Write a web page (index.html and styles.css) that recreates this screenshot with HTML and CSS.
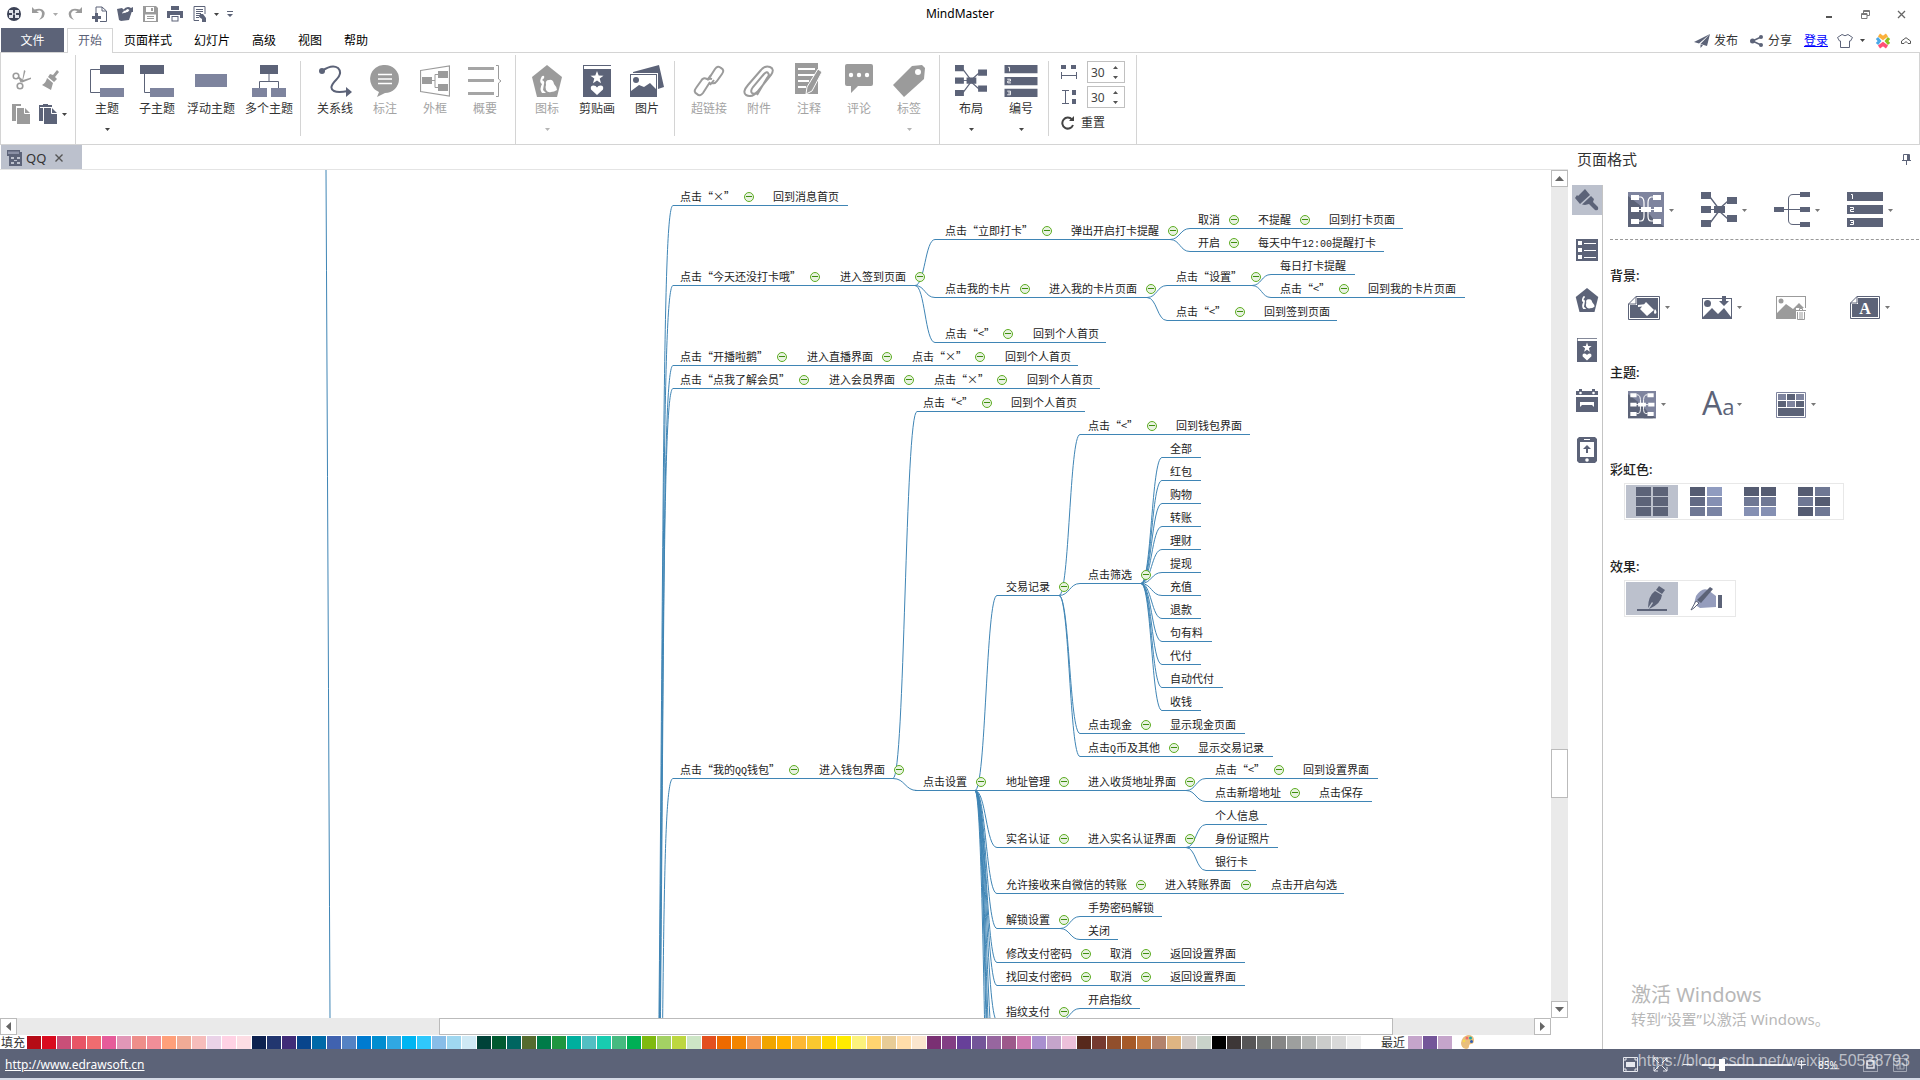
FILE: index.html
```html
<!DOCTYPE html>
<html lang="zh-CN">
<head>
<meta charset="utf-8">
<title>MindMaster</title>
<link rel="stylesheet" href="styles.css">
</head>
<body>
<svg class="sprite" aria-hidden="true">
  <symbol id="i-layout" viewBox="0 0 36 36">
    <path d="M9 5 18 17 27 9M9 31 18 19 27 27" fill="none" stroke="#5c6378" stroke-width="1.300"/>
    <path d="M0 0H10V7H0ZM0 14H10V21H0ZM0 28H10V35H0ZM13 14H24V21H13ZM26 5H36V12H26ZM26 23H36V30H26Z" fill="#5c6378"/>
    <path d="M9 17H14V18H9Z" fill="#5c6378"/>
  </symbol>
  <symbol id="i-number" viewBox="0 0 36 36">
    <path d="M0 0H36V9H0ZM0 13H36V22H0ZM0 26H36V35H0Z" fill="#5c6378"/>
    <path d="M4 2.500H5.500V7M3 15.500H6.500V17.500H3.500V19.500H7M3 28.500H6.500V32.500H3M4 30.500H6" fill="none" stroke="#fff" stroke-width="1"/>
  </symbol>
  <symbol id="i-theme" viewBox="0 0 36 36">
    <path d="M0 0H36V35H0Z" fill="#7e849e"/><path d="M0 4 18 18 32 35H0Z" fill="#5c6378"/><path d="M36 35 28 27 20 35Z" fill="#5c6378"/>
    <path d="M11 5H13Q16 6 16 11V24Q16 29 13 29H11M25 5H23Q20 6 20 11V24Q20 29 23 29H25M10 17.500H26" fill="none" stroke="#fff" stroke-width="1.200"/>
    <path d="M3 3H11V8H3ZM3 15H11V20H3ZM3 27H11V32H3ZM25 3H33V8H25ZM26 15H34V20H26ZM25 27H33V32H25ZM13 15H23V20H13Z" fill="#fff"/>
  </symbol>
  <symbol id="i-penta" viewBox="0 0 32 32">
    <path d="M16 0 31 12 26 32H6L1 12Z"/>
    <path d="M10 13q1-3 3-2 1 2-2 4 3 1 2 4l-1 6 3 3h-4q-3-4 0-9-3-2-1-6M15 25q-1-3 0-5-1-5 3-5 4-1 5 4 3 3 3 6-3 2-6 2-3 1-5-2Z" fill="#fff"/>
  </symbol>
  <symbol id="i-clip" viewBox="0 0 28 32">
    <path d="M0 4H28V32H0ZM0 0H28V1H1V4H0Z"/>
    <path d="M14 6 15.700 10.500 20.500 10.700 16.700 13.600 18 18.300 14 15.600 10 18.300 11.300 13.600 7.500 10.700 12.300 10.500ZM14 30 8 24.500Q7 20.500 10.500 20.500 13 20.500 14 22.500 15 20.500 17.500 20.500 21 20.500 20 24.500Z" fill="#fff"/>
  </symbol>
  <symbol id="i-caret" viewBox="0 0 5 3"><path d="M0 0H5L2.500 3Z"/></symbol>
</svg>

<header class="titlebar">
  <div class="quick">
    <svg class="ic" viewBox="0 0 18 18"><circle cx="9" cy="9" r="7" fill="#3c4256"/><path d="M4 5h4v3H4zM10 5h4v3h-4zM4 10h4v3H4zM10 10h4v3h-4zM7 8h4v2H7z" fill="#dfe2ea"/><path d="M9 3v12" stroke="#3c4256"/></svg>
    <button aria-label="撤销"><svg class="ic gray" viewBox="0 0 18 18"><path d="M2 2V8H9L6.500 6Q12 4 12 9 12 12 9 15 16 12 14.500 7 12 2 4.500 4.500Z"/></svg></button>
    <button class="tiny faint" aria-label="撤销列表"><svg class="caret" viewBox="0 0 5 3"><use href="#i-caret"/></svg></button>
    <button aria-label="重做"><svg class="ic gray" viewBox="0 0 18 18"><path d="M16 2V8H9L11.500 6Q6 4 5 9 5 12 8 15 1 12 3 7 6 2 13.500 4.500Z"/></svg></button>
    <button aria-label="新建"><svg class="ic" viewBox="0 0 18 18"><path d="M5 8V2H11L15.500 6V16.500H9" fill="none" stroke="#5c6378"/><path d="M11 2V6H15" fill="none" stroke="#5c6378"/><path d="M4 8H7V11H10V14H7V17H4V14H1V11H4Z"/></svg></button>
    <button aria-label="打开"><svg class="ic" viewBox="0 0 18 18"><path d="M1 4 6 3 8 5 7 8 5 16 3 15ZM7 8 16 6 13 15 5 16Z"/><path d="M7 5Q11 0 15 3L17 2V7H12L13.500 5Q11 3 9 6Z"/><path d="M6 8Q11 8 12 4" fill="none" stroke="#fff" stroke-width=".8"/></svg></button>
    <button aria-label="保存"><svg class="ic gray" viewBox="0 0 18 18"><path d="M2 1H15L17 3V17H2Z"/><path d="M5 2H13V7H5ZM4 9.500H15V16H4Z" fill="#fff"/><path d="M10 3h2v3h-2zM6 11h7v1H6zM6 13h7v1H6z"/></svg></button>
    <button aria-label="打印"><svg class="ic" viewBox="0 0 18 18"><path d="M5 1H13V5H5ZM1 6H17V13H14V10H4V13H1ZM5.500 11H12.500V16.500H5.500Z"/><path d="M6.500 12H11.500V15.500H6.500Z" fill="#fff"/></svg></button>
    <button aria-label="预览"><svg class="ic" viewBox="0 0 18 18"><path d="M3 1.500H14V9M3 1.500V15.500H8M5 4.500H12M5 6.500H12M5 8.500H10M5 10.500H9M5 12.500H8" fill="none" stroke="#5c6378"/><path d="M9 9H12L15 13V17H11V14L8 12Z"/></svg></button>
    <button class="tiny" aria-label="更多"><svg class="caret" viewBox="0 0 5 3"><use href="#i-caret"/></svg></button>
    <button class="tiny" aria-label="自定义快速访问"><svg width="6" height="7" viewBox="0 0 6 7"><path d="M0 0H6V1H0ZM0 3H6L3 6Z"/></svg></button>
  </div>
  <h1>MindMaster</h1>
  <div class="wincontrols">
    <button aria-label="最小化"><svg width="9" height="9" viewBox="0 0 9 9"><path d="M1 6H7V8H1Z" fill="#555"/></svg></button>
    <button aria-label="还原"><svg width="9" height="9" viewBox="0 0 9 9"><path d="M2.500 3V.5H8.500V5.500H6M.5 3.500H6V8.500H.5ZM2 1.500H9M0 4.500H6" fill="none" stroke="#777"/></svg></button>
    <button aria-label="关闭"><svg width="9" height="9" viewBox="0 0 9 9"><path d="M1 1 8 8M8 1 1 8" stroke="#666" stroke-width="1.300"/></svg></button>
  </div>
</header>

<nav class="menubar">
  <button class="file">文件</button>
  <button class="tab active">开始</button>
  <button class="tab">页面样式</button>
  <button class="tab">幻灯片</button>
  <button class="tab">高级</button>
  <button class="tab">视图</button>
  <button class="tab">帮助</button>
  <div class="account">
    <button><svg width="16" height="14" viewBox="0 0 16 14"><path d="M16 0 0 8 5 9.500ZM16 0 6.500 10 13 12ZM6.500 10.500 9 11.300 6.500 14Z"/></svg>发布</button>
    <button class="share"><svg width="13" height="12" viewBox="0 0 13 12"><path d="M11 2 2.500 6 11 10" fill="none" stroke="#5c6378" stroke-width="1.500"/><circle cx="2.500" cy="6" r="2.500"/><circle cx="11" cy="2" r="2"/><circle cx="11" cy="10" r="2"/></svg>分享</button>
    <a href="#login">登录</a>
    <button class="skin" aria-label="皮肤"><svg width="16" height="14" viewBox="0 0 16 14"><path d="M5 .5Q8 3 11 .5L15.500 3.500 13.500 7H12.500V13.500H3.500V7H2.500L.5 3.500Z" fill="none" stroke="#5c6378"/></svg><svg class="caret" viewBox="0 0 5 3"><use href="#i-caret"/></svg></button>
    <svg width="16" height="16" viewBox="0 0 16 16"><path d="M4 2 8 5 12 2" fill="none" stroke="#fbb03b" stroke-width="3.500"/><path d="M4 14 8 11 12 14" fill="none" stroke="#ff4f75" stroke-width="3.500"/><path d="M2 5 4.500 8 2 11" fill="none" stroke="#4aa8e8" stroke-width="3"/><path d="M14 5 11.500 8 14 11" fill="none" stroke="#8fc01f" stroke-width="3"/></svg>
    <button class="collapse" aria-label="折叠功能区"><svg width="10" height="8" viewBox="0 0 10 8"><path d="M.5 4 5 .7 9.500 4V6.500H7L5 4.500 3 6.500H.5Z" fill="none" stroke="#555"/></svg></button>
  </div>
</nav>

<section class="ribbon" aria-label="开始">
  <div class="group clipboard">
    <button aria-label="剪切"><svg class="gray" width="20" height="20" viewBox="0 0 20 20"><path d="M10 12 12 0 13.500 1 11 10 19 7.500V9L9 13Z"/><path d="M8 9 9.500 12" stroke="#9b9b9b" stroke-width="2"/><circle cx="4" cy="6" r="2.800" fill="none" stroke="#9b9b9b" stroke-width="1.600"/><circle cx="8" cy="16" r="2.800" fill="none" stroke="#9b9b9b" stroke-width="1.600"/><path d="M6 7 11 11" stroke="#9b9b9b" stroke-width="1.800"/></svg></button>
    <button class="brush" aria-label="格式刷"><svg class="gray" width="18" height="20" viewBox="0 0 18 20"><path d="M15 0 17 2 13 7 15 9 12 12 6 7 8 4 11 5ZM5 8 11 13 9 20 0 15Q4 13 5 8Z"/></svg></button>
    <button aria-label="复制"><svg class="gray" width="20" height="20" viewBox="0 0 20 20"><path d="M0 0H9V2H4V17H0ZM5 4H13L18 9V20H5Z"/><path d="M12.500 4V9.500H18" fill="none" stroke="#fff"/></svg></button>
    <button aria-label="粘贴"><svg width="20" height="20" viewBox="0 0 20 20"><path d="M0 1H4V0H9V1H13V3H4V17H0ZM5 4H13L18 9V20H5Z"/><path d="M12.500 4V9.500H18M1 3.500H12" fill="none" stroke="#fff"/></svg><svg class="caret" viewBox="0 0 5 3"><use href="#i-caret"/></svg></button>
  </div>
  <div class="group">
    <button class="tool"><svg width="34" height="32" viewBox="0 0 34 32"><path d="M10 0H34V9H10Z"/><path d="M10 23H34V32H10Z" fill="#7e849e"/><path d="M10 4.500H.5V27.500H10" fill="none" stroke="#5c6378"/></svg><span>主题</span><svg class="caret" viewBox="0 0 5 3"><use href="#i-caret"/></svg></button>
    <button class="tool"><svg width="34" height="32" viewBox="0 0 34 32"><path d="M0 0H24V9H0Z"/><path d="M10 23H34V32H10Z" fill="#7e849e"/><path d="M4.500 9V27.500H10" fill="none" stroke="#5c6378"/></svg><span>子主题</span></button>
    <button class="tool wide"><svg width="32" height="32" viewBox="0 0 32 32"><path d="M0 9H32V22H0Z" fill="#7e849e"/></svg><span>浮动主题</span></button>
    <button class="tool wide"><svg width="34" height="32" viewBox="0 0 34 32"><path d="M8 0H26V9H8Z"/><path d="M0 23H15V32H0ZM19 23H34V32H19Z" fill="#7e849e"/><path d="M17 9V16M7.500 23V16.500H26.500V23" fill="none" stroke="#5c6378"/></svg><span>多个主题</span></button>
    <div class="split"></div>
    <button class="tool"><svg width="34" height="32" viewBox="0 0 34 32"><circle cx="4" cy="6" r="3"/><path d="M4 6Q14-1 20 3 25 8 18 15 10 23 16 26 20 28 30 26" fill="none" stroke="#5c6378" stroke-width="2"/><path d="M28 22 34 27 28 32Z"/></svg><span>关系线</span></button>
    <button class="tool" disabled><svg width="30" height="32" viewBox="0 0 30 32"><path d="M15 0A14 14 0 0 1 15 28L7 32 9 27A14 14 0 0 1 15 0Z"/><path d="M8 9.500H22M8 14H22M8 18.500H22" stroke="#fff" stroke-width="1.500"/></svg><span>标注</span></button>
    <button class="tool" disabled><svg width="30" height="32" viewBox="0 0 30 32"><path d="M.5 5.500 29.500 1V31L.5 26.500Z" fill="none" stroke="#9b9b9b" stroke-width="1.200"/><path d="M2 12H12V19H2ZM18 6H28V13H18ZM18 19H28V26H18Z"/><path d="M12 15.500H15M18 9.500H15V22.500H18" fill="none" stroke="#9b9b9b"/></svg><span>外框</span></button>
    <button class="tool" disabled><svg width="34" height="32" viewBox="0 0 34 32"><path d="M0 2H26V5H0ZM0 14H26V17H0ZM0 27H26V30H0Z" opacity=".9"/><path d="M28 .5H30.500V14L33 16 30.500 18V31.500H28" fill="none" stroke="#9b9b9b"/></svg><span>概要</span></button>
  </div>
  <div class="group">
    <button class="tool" disabled><svg width="32" height="32"><use href="#i-penta"/></svg><span>图标</span><svg class="caret" viewBox="0 0 5 3"><use href="#i-caret"/></svg></button>
    <button class="tool"><svg width="28" height="32"><use href="#i-clip"/></svg><span>剪贴画</span></button>
    <button class="tool"><svg width="34" height="32" viewBox="0 0 34 32"><path d="M3 7 29 0 34 22 28 24V8H3ZM0 9H27V32H0Z"/><path d="M1 10H26V24L20 18 14 22 9 20 1 26Z" fill="#fff"/><circle cx="6" cy="15" r="3"/></svg><span>图片</span></button>
    <div class="split"></div>
    <button class="tool" disabled><svg width="32" height="32" viewBox="0 0 32 32"><g fill="none" stroke="#9b9b9b" stroke-width="2"><path d="M15 15 22 4Q25 0 28 3 32 5 29 9L24 16Q22 19 19 18"/><path d="M19 14Q16 13 14 15M17 17 10 28Q7 32 4 29 0 27 3 23L8 16Q10 12 14 14M18 10 14 15M21 15 17 20"/></g></svg><span>超链接</span></button>
    <button class="tool" disabled><svg width="32" height="32" viewBox="0 0 32 32"><path d="M21 9 10 22Q7 26 9 28 12 30 15 26L28 10Q32 4 27 2 22 0 18 5L5 20Q-1 27 3 30 9 33 14 27M21 9Q24 6 25 8 27 10 24 13L14 30" fill="none" stroke="#9b9b9b" stroke-width="2"/></svg><span>附件</span></button>
    <button class="tool" disabled><svg class="lift" width="28" height="32" viewBox="0 0 28 32"><path d="M0 0H23V31H0Z"/><path d="M3 6H20M3 12H20M3 18H14M3 24H11" stroke="#fff" stroke-width="2"/><path d="M23 6 27 9 17 28 11 31 12 24Z" stroke="#fff"/></svg><span>注释</span></button>
    <button class="tool" disabled><svg class="lift" width="28" height="32" viewBox="0 0 28 32"><path d="M2 1H26Q28 1 28 3V21Q28 23 26 23H13L6 30V23H2Q0 23 0 21V3Q0 1 2 1Z"/><g fill="#fff"><circle cx="6" cy="12" r="2.200"/><circle cx="14" cy="12" r="2.200"/><circle cx="22" cy="12" r="2.200"/></g></svg><span>评论</span></button>
    <button class="tool" disabled><svg width="32" height="32" viewBox="0 0 32 32"><path d="M19 1 29 0 32 3 31 14 11 32 0 20Z"/><circle cx="25" cy="7" r="3" fill="#fff"/></svg><span>标签</span><svg class="caret" viewBox="0 0 5 3"><use href="#i-caret"/></svg></button>
  </div>
  <div class="group">
    <button class="tool"><svg width="32" height="32"><use href="#i-layout"/></svg><span>布局</span><svg class="caret" viewBox="0 0 5 3"><use href="#i-caret"/></svg></button>
    <button class="tool"><svg width="34" height="33"><use href="#i-number"/></svg><span>编号</span><svg class="caret" viewBox="0 0 5 3"><use href="#i-caret"/></svg></button>
    <div class="split flush"></div>
    <div class="spacing">
      <label for="hgap" aria-label="水平间距"><svg width="16" height="16" viewBox="0 0 16 16"><path d="M0 1H5V5H0ZM10 1H15V5H10Z"/><path d="M.5 8V15M15.500 8V15M0 11.500H16" stroke="#5c6378" fill="none"/></svg></label>
      <div class="spin"><input id="hgap" type="text" value="30"><svg width="5" height="13" viewBox="0 0 5 13"><path d="M0 3 2.500 0 5 3ZM0 10H5L2.500 13Z" fill="#555"/></svg></div>
      <label for="vgap" aria-label="垂直间距"><svg width="16" height="16" viewBox="0 0 16 16"><path d="M11 1H15V6H11ZM11 10H15V15H11Z"/><path d="M1 1.500H8M1 14.500H8M4.500 1V15" stroke="#5c6378" fill="none"/></svg></label>
      <div class="spin"><input id="vgap" type="text" value="30"><svg width="5" height="13" viewBox="0 0 5 13"><path d="M0 3 2.500 0 5 3ZM0 10H5L2.500 13Z" fill="#555"/></svg></div>
      <button class="reset"><svg width="14" height="14" viewBox="0 0 14 14"><path d="M11 3.500A5.500 5.500 0 1 0 12 9" fill="none" stroke="#444" stroke-width="2"/><path d="M8 5H13V0Z" fill="#444"/></svg>重置</button>
    </div>
  </div>
</section>

<main class="body">
  <div class="workspace">
    <div class="doctabs">
      <div class="doctab">
        <svg width="16" height="16" viewBox="0 0 16 16"><path d="M0 0H13V2H15V16H2V6H0Z"/><path d="M1 1.500H12V4H1Z" fill="#8b91a6"/><path d="M4 7h3v2H4zM10 7h3v2h-3zM4 12h3v2H4zM10 12h3v2h-3zM7 10h3v1H7z" fill="#bcc1cd"/></svg>
        <span>QQ</span>
        <button aria-label="关闭文档"><svg width="8" height="8" viewBox="0 0 8 8"><path d="M.5.5 7.500 7.500M7.500.5.5 7.500" stroke="#555" stroke-width="1.400"/></svg></button>
      </div>
    </div>
    <div class="viewrow">
      <div class="canvas" id="canvas"></div>
      <div class="vscroll">
        <button aria-label="向上滚动"><svg width="9" height="5" viewBox="0 0 9 5"><path d="M0 5 4.500 0 9 5Z"/></svg></button>
        <div class="track"><div class="thumb"></div></div>
        <button aria-label="向下滚动"><svg width="9" height="5" viewBox="0 0 9 5"><path d="M0 0H9L4.500 5Z"/></svg></button>
      </div>
    </div>
    <div class="hscroll">
      <button aria-label="向左滚动"><svg width="5" height="9" viewBox="0 0 5 9"><path d="M5 0V9L0 4.500Z"/></svg></button>
      <div class="track"><div class="thumb"></div></div>
      <button aria-label="向右滚动"><svg width="5" height="9" viewBox="0 0 5 9"><path d="M0 0V9L5 4.500Z"/></svg></button>
    </div>
    <div class="palette">
      <span class="fill">填充</span>
      <div class="swatches" id="swatches"></div>
      <span class="recent">最近</span>
      <div class="swatches" id="recent"></div>
      <button class="more" aria-label="更多颜色"><svg width="13" height="14" viewBox="0 0 13 14"><path d="M7 0Q13 0 13 5 13 9 10 9 8 9 8 11 8 14 5 14 0 13 0 8 1 1 7 0Z" fill="#e9bf7c"/><circle cx="6" cy="3" r="1.500" fill="#f26d6d"/><circle cx="9.500" cy="3" r="1.500" fill="#22a7a7"/><circle cx="10.500" cy="6.500" r="1.500" fill="#3560b0"/><circle cx="3" cy="6" r="1.300" fill="#f7d94c"/></svg></button>
    </div>
  </div>

  <aside class="panel">
    <div class="panelhead"><h2>页面格式</h2><button aria-label="固定"><svg width="9" height="11" viewBox="0 0 9 11"><path d="M1.500 6V.5H7.500V6M5.500 0V6M6.500 0V6M0 6.500H9M4.500 7V11" fill="none" stroke="#5c6378"/></svg></button></div>
    <div class="panelbody">
      <div class="rail">
        <button class="on" aria-label="页面格式"><svg width="24" height="22" viewBox="0 0 24 22"><path d="M10 0 15 6 5 15 0 9 2 6 3 7ZM16 7 19 10 18 13 23 18Q24 22 20 21L14 15 10 16 7 15.500Z"/></svg></button>
        <button aria-label="大纲"><svg width="22" height="22" viewBox="0 0 22 22"><path d="M0 0H22V22H0Z"/><path d="M2 2H6V6H2ZM2 9H6V13H2ZM2 16H6V20H2ZM8 4H20V5H8ZM8 11H20V12H8ZM8 18H20V19H8Z" fill="#fff"/></svg></button>
        <button aria-label="图标"><svg width="24" height="24"><use href="#i-penta"/></svg></button>
        <button aria-label="剪贴画"><svg width="20" height="24" viewBox="0 0 28 32" preserveAspectRatio="none"><use href="#i-clip" width="28" height="32"/></svg></button>
        <button aria-label="任务"><svg width="22" height="23" viewBox="0 0 22 23"><path d="M0 2H3V0H6V2H16V0H19V2H22V6H0ZM0 8H22V23H0Z"/><circle cx="4.500" cy="4" r="1.300" fill="#fff"/><circle cx="17.500" cy="4" r="1.300" fill="#fff"/><path d="M4 13H18V18L16 16H6L4 18Z" fill="#fff"/></svg></button>
        <button aria-label="手机"><svg width="20" height="26" viewBox="0 0 20 26"><path d="M2 0H18L20 2V24L18 26H2L0 24V2Z"/><path d="M3 5H17V20H3ZM7 2H13V3H7Z" fill="#fff"/><circle cx="10" cy="23" r="1.800" fill="#fff"/><path d="M10 8 14 12H11V16H9V12H6Z"/></svg></button>
      </div>
      <div class="options">
        <div class="icons top">
          <button aria-label="主题样式"><svg width="36" height="36"><use href="#i-theme"/></svg><svg class="caret" viewBox="0 0 5 3"><use href="#i-caret"/></svg></button>
          <button aria-label="布局"><svg width="36" height="36"><use href="#i-layout"/></svg><svg class="caret" viewBox="0 0 5 3"><use href="#i-caret"/></svg></button>
          <button aria-label="连接线"><svg width="36" height="36" viewBox="0 0 36 36"><path d="M0 15H10V20H0ZM26 0H36V5H26ZM26 15H36V20H26ZM26 30H36V35H26Z"/><path d="M10 17.500H26M26 2.500H19Q14.500 2.500 14.500 7V28Q14.500 32.500 19 32.500H26" fill="none" stroke="#5c6378"/></svg><svg class="caret" viewBox="0 0 5 3"><use href="#i-caret"/></svg></button>
          <button aria-label="编号"><svg width="36" height="36"><use href="#i-number"/></svg><svg class="caret" viewBox="0 0 5 3"><use href="#i-caret"/></svg></button>
        </div>
        <section>
          <h3>背景:</h3>
          <div class="icons">
            <button aria-label="背景颜色"><svg width="32" height="24" viewBox="0 0 32 24"><path d="M8 .5H31.500V23.500H.5V8Z" fill="#fff" stroke="#5c6378"/><path d="M9 2H30V22H2V9H9Z"/><path d="M.5 8H8V.5" fill="none" stroke="#5c6378"/><path d="M12 13 18 6 26 14 19 20ZM10 9 18 8 18 10 10 11ZM27 13Q30 17 27 18 25 17 27 13Z" fill="#fff"/></svg><svg class="caret" viewBox="0 0 5 3"><use href="#i-caret"/></svg></button>
            <button aria-label="背景图片"><svg width="30" height="24" viewBox="0 0 30 24"><path d="M0 2H30V23H0Z"/><path d="M1 3H29V21L22 12 16 18 10 12 1 21Z" fill="#fff"/><circle cx="5.500" cy="7.500" r="3.500"/><path d="M20 0H24V5H27L22 10 17 5H20Z"/></svg><svg class="caret" viewBox="0 0 5 3"><use href="#i-caret"/></svg></button>
            <button aria-label="移除背景" disabled><svg width="30" height="24" viewBox="0 0 30 24"><path d="M0 0H30V23H0Z"/><path d="M1 1H29V13L23 7 17 13 10 8 1 17Z" fill="#fff"/><circle cx="5" cy="5" r="2.500"/><path d="M20 12H30V24H20Z" fill="#fff"/><path d="M20 14.500H30M23.500 14V12.500H26.500V14M21.500 16V23.500H28.500V16M24 16V23M26 16V23" fill="none" stroke="#9b9b9b"/></svg></button>
            <button aria-label="水印"><svg width="30" height="24" viewBox="0 0 30 24"><path d="M7 .5H29.500V22.500H.5V7Z" fill="#fff" stroke="#5c6378"/><path d="M8 2H28V21H2V8H8Z"/><path d="M.5 7H7V.5" fill="none" stroke="#5c6378"/><text x="15" y="18" text-anchor="middle" class="wm">A</text></svg><svg class="caret" viewBox="0 0 5 3"><use href="#i-caret"/></svg></button>
          </div>
        </section>
        <section>
          <h3>主题:</h3>
          <div class="icons">
            <button aria-label="主题"><svg width="28" height="28"><use href="#i-theme"/></svg><svg class="caret" viewBox="0 0 5 3"><use href="#i-caret"/></svg></button>
            <button aria-label="字体"><span class="aa">A<small>a</small></span><svg class="caret" viewBox="0 0 5 3"><use href="#i-caret"/></svg></button>
            <button aria-label="主题颜色"><svg width="30" height="26" viewBox="0 0 30 26"><path d="M.5.5H29.500V25.500H.5Z" fill="#fff" stroke="#7e849e"/><path d="M2 2H10V8H2ZM20 2H28V8H20ZM11 9H19V15H11Z" fill="#7e849e"/><path d="M11 2H19V8H11ZM2 9H10V15H2ZM20 9H28V15H20ZM2 16H28V24H2Z"/></svg><svg class="caret" viewBox="0 0 5 3"><use href="#i-caret"/></svg></button>
          </div>
        </section>
        <section>
          <h3>彩虹色:</h3>
          <div class="choices">
            <button class="on" aria-label="单色"><svg width="32" height="29" viewBox="0 0 32 29"><path d="M0 0H15V9H0ZM17 0H32V9H17ZM0 10H15V19H0ZM17 10H32V19H17ZM0 20H15V29H0ZM17 20H32V29H17Z"/></svg></button>
            <button aria-label="彩虹一"><svg width="32" height="29" viewBox="0 0 32 29"><path d="M0 0H15V9H0Z" fill="#555c72"/><path d="M17 0H32V9H17Z" fill="#909cc0"/><path d="M0 10H15V19H0Z" fill="#626a84"/><path d="M17 10H32V19H17Z" fill="#8590b3"/><path d="M0 20H15V29H0Z" fill="#6f7894"/><path d="M17 20H32V29H17Z" fill="#7a84a4"/></svg></button>
            <button aria-label="彩虹二"><svg width="32" height="29" viewBox="0 0 32 29"><path d="M0 0H15V9H0ZM17 0H32V9H17Z" fill="#555c72"/><path d="M0 10H15V19H0ZM17 10H32V19H17Z" fill="#6f7894"/><path d="M0 20H15V29H0ZM17 20H32V29H17Z" fill="#8590b3"/></svg></button>
            <button aria-label="彩虹三"><svg width="32" height="29" viewBox="0 0 32 29"><path d="M0 0H15V9H0ZM17 10H32V19H17ZM0 20H15V29H0Z" fill="#555c72"/><path d="M17 0H32V9H17ZM0 10H15V19H0ZM17 20H32V29H17Z" fill="#6f7894"/></svg></button>
          </div>
        </section>
        <section>
          <h3>效果:</h3>
          <div class="choices">
            <button class="on" aria-label="钢笔"><svg width="30" height="25" viewBox="0 0 30 25"><path d="M0 23H30V25H0Z"/><path d="M22 0 28 4 25 8 19 4ZM18 5 25 9Q24 18 12 23L16 17 15 16 11 22Q11 10 18 5Z"/></svg></button>
            <button aria-label="手绘"><svg width="32" height="26" viewBox="0 0 32 26"><path d="M6 10Q12 1 18 4L26 10V21L10 22 4 18Z" fill="#959dbd"/><path d="M28 9H32V22H28Z"/><path d="M20 1 23 3 11 17 7 14Z"/><path d="M6 15 9 17 4 22 1 24Z" fill="#fff" stroke="#5c6378"/></svg></button>
          </div>
        </section>
      </div>
    </div>
    <div class="activate"><p class="big">激活 Windows</p><p>转到“设置”以激活 Windows。</p></div>
  </aside>
</main>

<footer class="status">
  <a href="http://www.edrawsoft.cn">http://www.edrawsoft.cn</a>
  <div class="zoombar">
    <button aria-label="适应页面"><svg width="15" height="15" viewBox="0 0 15 15"><path d="M.5.500H14.500V14.500H.5Z" fill="none" stroke="#e6e8ee"/><path d="M3 5H12V10H3Z" fill="#e6e8ee"/><path d="M2 4V2H4M11 2H13V4M13 11V13H11M4 13H2V11" fill="none" stroke="#e6e8ee"/></svg></button>
    <button class="full" aria-label="全屏"><svg width="15" height="15" viewBox="0 0 15 15"><path d="M1 5V1H5M10 1H14V5M14 10V14H10M5 14H1V10M1 1 6 6M14 1 9 6M14 14 9 9M1 14 6 9" fill="none" stroke="#e6e8ee"/></svg></button>
    <button class="step" aria-label="缩小"><svg width="9" height="9" viewBox="0 0 9 9"><path d="M0 4H9V5H0Z" fill="#e6e8ee"/></svg></button>
    <input type="range" aria-label="缩放" min="0" max="100" value="20">
    <button class="step" aria-label="放大"><svg width="9" height="9" viewBox="0 0 9 9"><path d="M0 4H9V5H0ZM4 0H5V9H4Z" fill="#e6e8ee"/></svg></button>
    <span class="pct">85%</span>
    <button class="fit" aria-label="适应窗口"><svg width="15" height="15" viewBox="0 0 15 15"><path d="M.5.500H14.500V14.500H.5Z" fill="none" stroke="#e6e8ee" stroke-dasharray="1 1"/><path d="M4 4H11V11H4Z" fill="none" stroke="#e6e8ee" stroke-width="1.500"/></svg></button>
    <button aria-label="导航"><svg width="14" height="14" viewBox="0 0 14 14" opacity=".5"><path d="M.5.500H13.500V13.500H.5ZM4 3H7V11H4ZM7 6H11V11H7Z" fill="none" stroke="#e6e8ee"/></svg></button>
  </div>
  <div class="stamp">https://blog.csdn.net/weixin_50538793</div>
</footer>
<div class="taskbar"></div>
<script src="app.js"></script>
</body>
</html>
```

FILE: styles.css
```css
* { box-sizing: border-box; }
body {
  margin: 0;
  min-height: 100vh;
  display: flex;
  flex-direction: column;
  background: #fff;
  color: #333;
  font: 12px/16px "Noto Sans", "Noto Sans CJK SC", sans-serif;
  overflow: hidden;
}
button {
  border: 0;
  padding: 0;
  margin: 0;
  background: none;
  font: inherit;
  color: inherit;
  fill: inherit;
  display: flex;
  align-items: center;
  justify-content: center;
}
h1, h2, h3, p { margin: 0; font-weight: 400; }
svg { fill: #5c6378; flex: none; display: block; }
.sprite { position: absolute; width: 0; height: 0; fill: inherit; }
.sprite symbol { fill: inherit; }
.caret { width: 5px; height: 3px; fill: #444; }
.gray { fill: #9b9b9b; }

.titlebar {
  display: grid;
  grid-template-columns: 1fr auto 1fr;
  height: 28px;
  align-items: center;
}
.quick { display: flex; align-items: center; padding-left: 5px; height: 26px; }
.quick > * { width: 18px; margin-right: 7px; }
.quick .ic { width: 18px; height: 18px; }
.quick > .tiny { width: 6px; margin-right: 8px; margin-left: -3px; }
.quick > .tiny + .tiny { margin-left: 0; }
.quick .faint .caret { fill: #aaa; }
.titlebar h1 { font-size: 12px; color: #000; }
.wincontrols { display: flex; justify-content: flex-end; gap: 27px; padding-right: 14px; height: 24px; }

.menubar { display: flex; height: 25px; margin-bottom: -1px; position: relative; color: #000; }
.file { width: 63px; margin-left: 1px; padding-top: 1px; background: #5c6378; color: #fff; height: 24px; }
.tab { padding: 2px 11px 0; height: 24px; }
.tab.active {
  margin: 0 0 0 3px;
  padding: 0 10px;
  height: 25px;
  border: 1px solid #d4d4d4;
  border-bottom: 0;
  background: #fff;
  color: #5c6378;
}
.account { margin-left: auto; display: flex; align-items: center; padding-right: 9px; color: #333; }
.account button { gap: 4px; }
.account .share { margin: 0 12px; gap: 5px; }
.account a { color: #00f; }
.account .skin { margin: 0 10px 0 9px; gap: 7px; }
.account .collapse { margin-left: 10px; }

.ribbon { display: flex; height: 93px; border: 1px solid #d4d4d4; }
.group { display: flex; margin-top: 2px; padding: 0 5px 0 6px; border-right: 1px solid #d4d4d4; }
.split { width: 1px; height: 75px; background: #d4d4d4; margin: 6px 9px 0 2px; }
.split.flush { margin-right: 0; }
.clipboard { display: grid; grid-template: 34px 34px / 27px 34px; padding: 8px 2px 0 11px; width: 75px; }
.clipboard button { justify-content: flex-start; gap: 3px; }
.clipboard .brush { padding-left: 3px; }
.tool {
  width: 50px;
  height: 80px;
  padding-top: 10px;
  display: grid;
  grid-template-rows: 32px 24px 10px;
  justify-items: center;
  align-items: center;
  justify-content: center;
  align-content: start;
  white-space: nowrap;
}
.tool.wide { width: 58px; }
.tool svg:first-child { align-self: start; }
.tool .caret { align-self: end; }
.tool .lift { margin-top: -2px; }
.tool:disabled { color: #a3a3a3; }
button:disabled svg { fill: #9b9b9b; }
.tool:disabled .caret { fill: #b5b5b5; }
.spacing {
  display: grid;
  grid-template-columns: 16px 38px;
  grid-template-rows: 22px 22px 24px;
  column-gap: 10px;
  row-gap: 3px;
  padding: 6px 6px 0 12px;
  align-items: center;
}
.spin { display: flex; align-items: center; height: 22px; border: 1px solid #c0c0c0; padding-right: 6px; }
.spin input { width: 25px; border: 0; padding: 1px 0 0 3px; font: inherit; color: #444; outline: 0; }
.reset { grid-column: 1 / 3; justify-content: flex-start; gap: 6px; }

.body { flex: 1; display: flex; min-height: 0; }
.workspace { flex: 1; min-width: 0; display: flex; flex-direction: column; }
.doctabs { height: 25px; border-bottom: 1px solid #e4e4e4; padding: 0 0 0 1px; display: flex; }
.doctab { width: 81px; background: #bcc1cd; display: flex; align-items: center; padding: 1px 0 0 6px; font-size: 13px; }
.doctab span { margin: 0 9px 0 3px; }
.viewrow { flex: 1; display: flex; min-height: 0; }
.canvas { flex: 1; min-width: 0; position: relative; overflow: hidden; font: 11px/14px "Noto Sans CJK SC", sans-serif; color: #222; }
.canvas svg { width: 100%; height: 100%; overflow: hidden; }
.canvas path { fill: none; stroke: #3f85b5; }
.canvas circle { fill: #e9f2e2; stroke: #5dad22; }
.canvas .minus { stroke: #3f8f0f; }
.node { position: absolute; white-space: nowrap; }
.node span { font: 10px/14px "Liberation Mono", monospace; }
.vscroll, .hscroll { display: flex; background: #eaeaea; }
.vscroll { width: 17px; flex-direction: column; }
.hscroll { height: 17px; margin-right: 17px; }
.vscroll button, .hscroll button { width: 17px; height: 17px; border: 1px solid #bbb; background: #fff; }
.vscroll svg, .hscroll svg { fill: #666; }
.track { flex: 1; }
.thumb { background: #fff; border: 1px solid #bbb; }
.vscroll .track { display: grid; grid-template-rows: 69fr 6fr 25fr; }
.vscroll .thumb { grid-row: 2; }
.hscroll .track { display: grid; grid-template-columns: 278fr 629fr 93fr; }
.hscroll .thumb { grid-column: 2; }
.palette { display: flex; height: 14px; align-items: center; }
.palette .fill { width: 27px; padding: 1px 0 0 1px; }
.swatches { display: flex; gap: 1px; }
.swatches button { width: 14px; height: 13px; }
.recent { margin: 0 3px 0 20px; padding-top: 1px; }
.more { margin-left: 9px; }

.panel { width: 352px; position: relative; display: flex; flex-direction: column; }
.panelhead { display: flex; justify-content: space-between; padding: 0 9px; height: 28px; align-items: center; }
.panelhead h2 { font-size: 15px; }
.panelbody { flex: 1; display: flex; margin-top: 12px; padding-left: 4px; }
.rail { width: 33px; border-right: 1px solid #c4c4c4; display: flex; flex-direction: column; gap: 20px; }
.rail button { width: 30px; height: 30px; }
.on { background: #bcc1cd; }
.options { flex: 1; padding: 7px 16px 0 7px; }
.icons { display: grid; grid-template-columns: repeat(4, 74px); height: 37px; margin-left: 18px; align-items: center; }
.icons button { justify-content: flex-start; gap: 5px; }
.icons .caret { fill: #777; }
.top { height: 48px; padding-bottom: 12px; margin-bottom: 25px; grid-template-columns: repeat(4, 73px); position: relative; }
.top::after { content: ""; position: absolute; left: -18px; right: 0; bottom: 0; border-bottom: 1px dashed #999; }
.options section { height: 97px; }
.options h3 { font-size: 13px; font-weight: 500; line-height: 20px; margin-bottom: 4px; color: #222; }
.wm { font: 700 16px "Liberation Serif", serif; fill: #fff; }
.aa { font: 32px/28px "Open Sans", sans-serif; color: #5c6378; width: 30px; white-space: nowrap; }
.aa small { font-size: 22px; }
.choices { display: inline-flex; gap: 2px; padding: 1px; margin-left: 14px; border: 1px solid #e8e8e8; }
.choices button { width: 52px; height: 33px; }
.choices::after { content: ""; width: 0; }
.activate { position: absolute; left: 63px; bottom: 18px; color: #b7b7b7; font-size: 15px; line-height: 24px; }
.activate .big { font-size: 20px; }

.status { position: relative; height: 29px; background: #5c6378; display: flex; align-items: center; justify-content: space-between; padding: 0 13px 0 5px; color: #fff; }
.status > a { color: #fff; padding-top: 2px; }
.zoombar { display: flex; align-items: center; padding-top: 2px; }
.full { margin: 0 15px; }
.zoombar input {
  appearance: none;
  width: 90px;
  height: 12px;
  margin: 0 5px 0 10px;
  background: linear-gradient(#e6e8ee, #e6e8ee) center / 100% 2px no-repeat;
}
.zoombar input::-webkit-slider-thumb { appearance: none; width: 6px; height: 12px; background: #fff; }
.pct { margin: 0 25px 0 12px; width: 20px; font-size: 10px; }
.fit { margin-right: 15px; }
.stamp { position: absolute; right: 10px; top: 3px; font: 16px/18px "Liberation Sans", sans-serif; color: rgba(255, 255, 255, .6); }
.taskbar { height: 2px; background: #d5dae6; }
```

FILE: app.js
```js
// One entry per branch line: baseline y, start x, end x, labels as [x, text], collapse handles as x.
const rows = [
  [35, 673, 848, [[680, '点击“×”'], [773, '回到消息首页']], [749]],
  [115, 673, 915, [[680, '点击“今天还没打卡哦”'], [840, '进入签到页面']], [815, 920]],
  [69, 935, 1170, [[945, '点击“立即打卡”'], [1071, '弹出开启打卡提醒']], [1047, 1173]],
  [127, 935, 1147, [[945, '点击我的卡片'], [1049, '进入我的卡片页面']], [1025, 1151]],
  [172, 935, 1106, [[945, '点击“<”'], [1033, '回到个人首页']], [1008]],
  [195, 673, 1078, [[680, '点击“开播啦鹅”'], [807, '进入直播界面'], [912, '点击“×”'], [1005, '回到个人首页']], [782, 887, 980]],
  [218, 673, 1100, [[680, '点击“点我了解会员”'], [829, '进入会员界面'], [934, '点击“×”'], [1027, '回到个人首页']], [804, 909, 1002]],
  [241, 917, 1085, [[923, '点击“<”'], [1011, '回到个人首页']], [987]],
  [58, 1190, 1403, [[1198, '取消'], [1258, '不提醒'], [1329, '回到打卡页面']], [1234, 1305]],
  [81, 1190, 1384, [[1198, '开启'], [1258, '每天中午12:00提醒打卡']], [1234]],
  [115, 1167, 1253, [[1176, '点击“设置”']], [1256]],
  [150, 1167, 1337, [[1176, '点击“<”'], [1264, '回到签到页面']], [1240]],
  [104, 1271, 1355, [[1280, '每日打卡提醒']], []],
  [127, 1271, 1465, [[1280, '点击“<”'], [1368, '回到我的卡片页面']], [1344]],
  [264, 1080, 1250, [[1088, '点击“<”'], [1176, '回到钱包界面']], [1152]],
  [413, 1080, 1141, [[1088, '点击筛选']], [1146]],
  [425, 997, 1059, [[1006, '交易记录']], [1064]],
  [563, 1080, 1245, [[1088, '点击现金'], [1170, '显示现金页面']], [1146]],
  [586, 1080, 1273, [[1088, '点击Q币及其他'], [1198, '显示交易记录']], [1174]],
  [608, 673, 893, [[680, '点击“我的QQ钱包”'], [819, '进入钱包界面']], [794, 899]],
  [620, 915, 975, [[923, '点击设置']], [981]],
  [620, 975, 1186, [[1006, '地址管理'], [1088, '进入收货地址界面']], [1064, 1190]],
  [608, 1206, 1378, [[1215, '点击“<”'], [1303, '回到设置界面']], [1279]],
  [631, 1206, 1372, [[1215, '点击新增地址'], [1319, '点击保存']], [1295]],
  [677, 997, 1186, [[1006, '实名认证'], [1088, '进入实名认证界面']], [1064, 1190]],
  [654, 1206, 1267, [[1215, '个人信息']], []],
  [677, 1186, 1278, [[1215, '身份证照片']], []],
  [700, 1206, 1256, [[1215, '银行卡']], []],
  [723, 997, 1344, [[1006, '允许接收来自微信的转账'], [1165, '进入转账界面'], [1271, '点击开启勾选']], [1141, 1246]],
  [758, 997, 1060, [[1006, '解锁设置']], [1064]],
  [746, 1080, 1162, [[1088, '手势密码解锁']], []],
  [769, 1080, 1118, [[1088, '关闭']], []],
  [792, 997, 1245, [[1006, '修改支付密码'], [1110, '取消'], [1170, '返回设置界面']], [1086, 1146]],
  [815, 997, 1245, [[1006, '找回支付密码'], [1110, '取消'], [1170, '返回设置界面']], [1086, 1146]],
  [850, 997, 1060, [[1006, '指纹支付']], [1064]],
  [838, 1080, 1140, [[1088, '开启指纹']], []]
];
['全部', '红包', '购物', '转账', '理财', '提现', '充值', '退款', '句有料', '代付', '自动代付', '收钱'].forEach((t, i) => {
  rows.push([287 + i * 23, 1162, 1179 + t.length * 11, [[1170, t]], []]);
});

// Fans: parent end point, child start x, child baselines.
const fans = [
  [915, 115, 935, [69, 127, 172]],
  [1170, 69, 1190, [58, 81]],
  [1147, 127, 1167, [115, 150]],
  [1252, 115, 1271, [104, 127]],
  [893, 608, 917, [241, 620]],
  [975, 620, 997, [425, 677, 723, 758, 792, 815, 850, 900, 960, 1020, 1080, 1240]],
  [1059, 425, 1080, [264, 413, 563, 586]],
  [1141, 413, 1162, [287, 310, 333, 356, 379, 402, 425, 448, 471, 494, 517, 540]],
  [1186, 620, 1206, [608, 631]],
  [1186, 677, 1206, [654, 700]],
  [1060, 758, 1080, [746, 769]],
  [1060, 850, 1080, [838, 862]]
];

let lines = '<path d="M326 0Q328 400 330 848"/>';
let dots = '';
let labels = '';
for (const [px, py, cx, ys] of fans) {
  const mid = (px + cx) / 2;
  for (const y of ys) lines += `<path d="M${px} ${py + .5}C${mid} ${py + .5} ${mid} ${y + .5} ${cx} ${y + .5}"/>`;
}
// Branches that leave the off-screen root share one trunk on the left.
[35, 115, 195, 218].forEach((y, i) => {
  lines += `<path d="M673 ${y + .5}C663 ${y + .5} 664 ${y + 260} ${658.5 + i * .5} 900"/>`;
});
lines += '<path d="M673 608.5C664 608.5 664 740 661 1000"/>';
for (const [y, x1, x2, texts, handles] of rows) {
  lines += `<path d="M${x1} ${y + .5}H${x2}"/>`;
  for (const x of handles) {
    dots += `<circle cx="${x}" cy="${y - 8}" r="4.5"/><path class="minus" d="M${x - 3} ${y - 8.5}H${x + 3}"/>`;
  }
  for (const [x, t] of texts) {
    const html = t.replace('<', '&lt;').replace(/Q+|[\d:]+/g, m => `<span>${m}</span>`);
    labels += `<div class="node" style="left:${x}px;top:${y - 16}px">${html}</div>`;
  }
}
document.getElementById('canvas').innerHTML = `<svg>${lines}${dots}</svg>${labels}`;

const palette = ('b50b16 d90b1f c94f78 e85566 ef6c70 e65c9a e197b7 ee8e8a f18e98 ffa07a f0ab96 f6bdbb ead3e8 ffd2e4 fddde4 ' +
  '0d2250 22366f 402c78 08458c 0069a8 4062af 5482c4 007bd0 008dd0 30a8e2 00b5f2 2fc8fc 88bde8 9fd7f0 cfe9f5 ' +
  '004238 005a30 006560 556b2f 007b48 1f963f 00af9e 52bfc3 18ccb0 46ba80 00af55 7fba10 a3d164 bdd740 cde6c6 ' +
  'e3501f ed6a00 f38500 f39850 f0a500 ffb000 fdb833 f9c82f ffd800 ffec00 fcf27c ffd470 e8cc96 ffddaa fbe6ce ' +
  '7a3073 833f84 674099 745599 97669f 9d598b cc7ab0 a990cf c5a5cb ecc0da 57291c 763a30 914f2c a65a28 c0763f b3836c dfb583 d3cac5 c9d3ca ' +
  '000000 3d3737 575657 6d6f6e 868686 9d9f9e b3b5b4 cbcccb d9d9d9 eeeeee').split(' ');
const swatch = c => `<button style="background:#${c}" aria-label="#${c}"></button>`;
document.getElementById('swatches').innerHTML = palette.map(swatch).join('');
document.getElementById('recent').innerHTML = ['c5a5cb', '745599', 'c5a5cb'].map(swatch).join('');
```
